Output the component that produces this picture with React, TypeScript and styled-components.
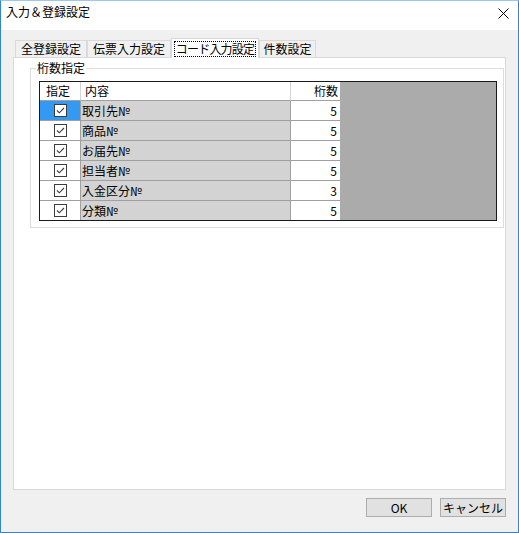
import React from "react";
import styled, { createGlobalStyle } from "styled-components";

const Global = createGlobalStyle`
  html, body { margin: 0; padding: 0; background: #ffffff; }
  body { font-family: "Noto Sans CJK JP", "Noto Sans", sans-serif; font-size: 12px; color: #000; }
  * { box-sizing: border-box; }
`;

const Window = styled.div`
  width: 519px;
  height: 533px;
  border: 1px solid #2f86d8;
  border-top-color: #9fc6ec;
  display: flex;
  flex-direction: column;
  background: #f0f0f0;
`;

const TitleBar = styled.div`
  height: 29px;
  background: #ffffff;
  display: flex;
  align-items: flex-start;
  justify-content: space-between;
  padding: 3px 8px 0 5px;
  font-size: 12px;
  line-height: 16px;
`;

const CloseButton = styled.div`
  width: 14px;
  height: 14px;
  margin-top: 2px;
  display: flex;
  align-items: center;
  justify-content: center;
`;

const Body = styled.div`
  flex: 1;
  display: flex;
  flex-direction: column;
  padding: 8px 12px 0 12px;
`;

const TabStrip = styled.div`
  display: flex;
  align-items: flex-end;
  height: 19px;
  padding-left: 2px;
`;

const Tab = styled.div<{ $selected?: boolean; $w: number }>`
  width: ${(p) => p.$w}px;
  height: ${(p) => (p.$selected ? 20 : 17)}px;
  margin-bottom: ${(p) => (p.$selected ? -1 : 0)}px;
  position: relative;
  z-index: ${(p) => (p.$selected ? 2 : 0)};
  background: ${(p) => (p.$selected ? "#ffffff" : "#f0f0f0")};
  border: 1px solid #d9d9d9;
  border-bottom: none;
  display: flex;
  align-items: center;
  justify-content: center;
  font-size: 12px;
  line-height: 14px;
  white-space: nowrap;
`;

const FocusText = styled.span`
  outline: 1px dotted #000;
  outline-offset: 0px;
  padding: 0 1px;
  letter-spacing: -0.8px;
`;

const Panel = styled.div`
  height: 433px;
  background: #ffffff;
  border: 1px solid #d9d9d9;
  position: relative;
  z-index: 1;
`;

const Group = styled.fieldset`
  margin: 3px 1px 0 16px;
  padding: 6px 6px 6px 8px;
  border: 1px solid #dcdcdc;
  min-width: 0;
`;

const GroupLabel = styled.legend`
  padding: 0 1px;
  margin-left: -3px;
  font-size: 12px;
  line-height: 14px;
`;

const Grid = styled.div`
  border: 1px solid #1a1a1a;
  display: flex;
  flex-direction: column;
  background: #ababab;
`;

const GridRow = styled.div`
  display: grid;
  grid-template-columns: 41px 210px 49px 1fr;
  height: ${(p: { $last?: boolean }) => (p.$last ? 19 : 20)}px;
`;

const HeaderRow = styled.div`
  display: grid;
  grid-template-columns: 41px 210px 49px 1fr;
  height: 19px;
`;

const HeaderCell = styled.div<{ $align: "left" | "center" | "right" }>`
  background: #ffffff;
  border-right: 1px solid #d4d4d4;
  border-bottom: 1px solid #a0a0a0;
  display: flex;
  align-items: center;
  justify-content: ${(p) =>
    p.$align === "center" ? "center" : p.$align === "right" ? "flex-end" : "flex-start"};
  padding: 0 ${(p) => (p.$align === "right" ? 2 : 4)}px 0 ${(p) => (p.$align === "left" ? 4 : 0)}px;
  font-size: 12px;
  line-height: 14px;

  &:nth-child(3) { border-right: none; }
`;

const Cell = styled.div<{ $bg: string; $last?: boolean; $noRight?: boolean; $align?: "left" | "center" | "right" }>`
  background: ${(p) => p.$bg};
  border-right: ${(p) => (p.$noRight ? "none" : "1px solid #a0a0a0")};
  border-bottom: ${(p) => (p.$last ? "none" : "1px solid #a0a0a0")};
  display: flex;
  align-items: center;
  justify-content: ${(p) =>
    p.$align === "center" ? "center" : p.$align === "right" ? "flex-end" : "flex-start"};
  padding: 0 ${(p) => (p.$align === "right" ? 3 : 0)}px 0 ${(p) => (p.$align === "left" ? 1 : 0)}px;
  font-size: 12px;
  line-height: 14px;
  white-space: nowrap;
  overflow: hidden;
`;

const Filler = styled.div`
  background: #ababab;
`;

const ButtonRow = styled.div`
  display: flex;
  justify-content: flex-end;
  gap: 8px;
  margin-top: 8px;
`;

const Button = styled.button`
  width: 66px;
  height: 19px;
  background: #e1e1e1;
  border: 1px solid #adadad;
  font-family: "Noto Sans CJK JP", "Noto Sans", sans-serif;
  font-size: 12px;
  line-height: 14px;
  padding: 0;
  color: #000;
  display: flex;
  align-items: center;
  justify-content: center;
`;

const CheckBox: React.FC = () => (
  <svg width="13" height="13" viewBox="0 0 13 13">
    <rect x="0.5" y="0.5" width="12" height="12" fill="#ffffff" stroke="#3c3c3c" />
    <polyline points="3,6.5 5.3,8.8 10,4" fill="none" stroke="#3c3c3c" strokeWidth="1.1" />
  </svg>
);

const rows = [
  { name: "取引先№", digits: 5 },
  { name: "商品№", digits: 5 },
  { name: "お届先№", digits: 5 },
  { name: "担当者№", digits: 5 },
  { name: "入金区分№", digits: 3 },
  { name: "分類№", digits: 5 },
];

const tabs = [
  { label: "全登録設定", w: 72 },
  { label: "伝票入力設定", w: 84 },
  { label: "コード入力設定", w: 88, selected: true },
  { label: "件数設定", w: 57 },
];

export default function App() {
  return (
    <>
      <Global />
      <Window>
        <TitleBar>
          <span>入力＆登録設定</span>
          <CloseButton>
            <svg width="11" height="11" viewBox="0 0 11 11">
              <path d="M0.5 0.5 L10.5 10.5 M10.5 0.5 L0.5 10.5" stroke="#000" strokeWidth="1" />
            </svg>
          </CloseButton>
        </TitleBar>
        <Body>
          <TabStrip>
            {tabs.map((t) => (
              <Tab key={t.label} $w={t.w} $selected={t.selected}>
                {t.selected ? <FocusText>{t.label}</FocusText> : t.label}
              </Tab>
            ))}
          </TabStrip>
          <Panel>
            <Group>
              <GroupLabel>桁数指定</GroupLabel>
              <Grid>
                <HeaderRow>
                  <HeaderCell $align="center">指定</HeaderCell>
                  <HeaderCell $align="left">内容</HeaderCell>
                  <HeaderCell $align="right">桁数</HeaderCell>
                  <Filler />
                </HeaderRow>
                {rows.map((r, i) => {
                  const last = i === rows.length - 1;
                  return (
                    <GridRow key={r.name} $last={last}>
                      <Cell $bg={i === 0 ? "#3399f3" : "#ffffff"} $last={last} $align="center">
                        <CheckBox />
                      </Cell>
                      <Cell $bg="#d3d3d3" $last={last} $align="left">
                        {r.name}
                      </Cell>
                      <Cell $bg="#ffffff" $last={last} $noRight $align="right">
                        {r.digits}
                      </Cell>
                      <Filler />
                    </GridRow>
                  );
                })}
              </Grid>
            </Group>
          </Panel>
          <ButtonRow>
            <Button>OK</Button>
            <Button>キャンセル</Button>
          </ButtonRow>
        </Body>
      </Window>
    </>
  );
}
